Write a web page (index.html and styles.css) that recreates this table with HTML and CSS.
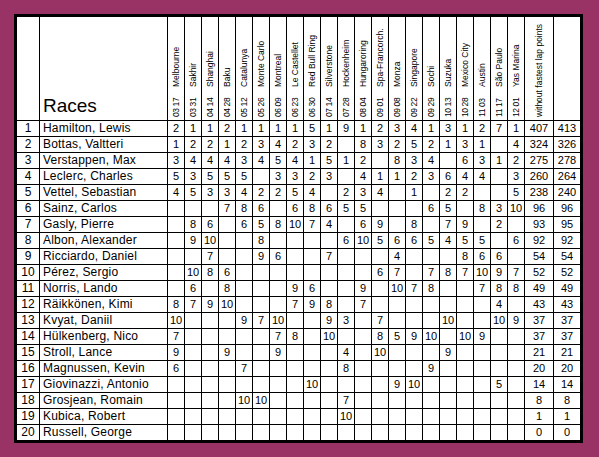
FILE: index.html
```html
<!DOCTYPE html>
<html>
<head>
<meta charset="utf-8">
<link rel="stylesheet" href="styles.css">
</head>
<body>
<table class="grid">
<colgroup>
<col class="c-pos"><col class="c-name">
<col class="c-race"><col class="c-race"><col class="c-race"><col class="c-race"><col class="c-race"><col class="c-race"><col class="c-race">
<col class="c-race"><col class="c-race"><col class="c-race"><col class="c-race"><col class="c-race"><col class="c-race"><col class="c-race">
<col class="c-race"><col class="c-race"><col class="c-race"><col class="c-race"><col class="c-race"><col class="c-race"><col class="c-race">
<col class="c-wo"><col class="c-pts">
</colgroup>
<thead>
<tr class="head">
<td></td>
<td class="title">Races</td>
<td><div class="vt"><span class="d">03 17</span><span class="n">Melbourne</span></div></td>
<td><div class="vt"><span class="d">03 31</span><span class="n">Sakhir</span></div></td>
<td><div class="vt"><span class="d">04 14</span><span class="n">Shanghai</span></div></td>
<td><div class="vt"><span class="d">04 28</span><span class="n">Baku</span></div></td>
<td><div class="vt"><span class="d">05 12</span><span class="n">Catalunya</span></div></td>
<td><div class="vt"><span class="d">05 26</span><span class="n">Monte Carlo</span></div></td>
<td><div class="vt"><span class="d">06 09</span><span class="n">Montreal</span></div></td>
<td><div class="vt"><span class="d">06 23</span><span class="n">Le Castellet</span></div></td>
<td><div class="vt"><span class="d">06 30</span><span class="n">Red Bull Ring</span></div></td>
<td><div class="vt"><span class="d">07 14</span><span class="n">Silverstone</span></div></td>
<td><div class="vt"><span class="d">07 28</span><span class="n">Hockenheim</span></div></td>
<td><div class="vt"><span class="d">08 04</span><span class="n">Hungaroring</span></div></td>
<td><div class="vt"><span class="d">09 01</span><span class="n">Spa-Francorch.</span></div></td>
<td><div class="vt"><span class="d">09 08</span><span class="n">Monza</span></div></td>
<td><div class="vt"><span class="d">09 22</span><span class="n">Singapore</span></div></td>
<td><div class="vt"><span class="d">09 29</span><span class="n">Sochi</span></div></td>
<td><div class="vt"><span class="d">10 13</span><span class="n">Suzuka</span></div></td>
<td><div class="vt"><span class="d">10 28</span><span class="n">Mexico City</span></div></td>
<td><div class="vt"><span class="d">11 03</span><span class="n">Austin</span></div></td>
<td><div class="vt"><span class="d">11 17</span><span class="n">São Paulo</span></div></td>
<td><div class="vt"><span class="d">12 01</span><span class="n">Yas Marina</span></div></td>
<td><div class="vt wide">without fastest lap points</div></td>
<td></td>
</tr>
</thead>
<tbody>
<tr><td class="pos">1</td><td class="name">Hamilton, Lewis</td><td>2</td><td>1</td><td>1</td><td>2</td><td>1</td><td>1</td><td>1</td><td>1</td><td>5</td><td>1</td><td>9</td><td>1</td><td>2</td><td>3</td><td>4</td><td>1</td><td>3</td><td>1</td><td>2</td><td>7</td><td>1</td><td class="pt">407</td><td class="pt">413</td></tr>
<tr><td class="pos">2</td><td class="name">Bottas, Valtteri</td><td>1</td><td>2</td><td>2</td><td>1</td><td>2</td><td>3</td><td>4</td><td>2</td><td>3</td><td>2</td><td></td><td>8</td><td>3</td><td>2</td><td>5</td><td>2</td><td>1</td><td>3</td><td>1</td><td></td><td>4</td><td class="pt">324</td><td class="pt">326</td></tr>
<tr><td class="pos">3</td><td class="name">Verstappen, Max</td><td>3</td><td>4</td><td>4</td><td>4</td><td>3</td><td>4</td><td>5</td><td>4</td><td>1</td><td>5</td><td>1</td><td>2</td><td></td><td>8</td><td>3</td><td>4</td><td></td><td>6</td><td>3</td><td>1</td><td>2</td><td class="pt">275</td><td class="pt">278</td></tr>
<tr><td class="pos">4</td><td class="name">Leclerc, Charles</td><td>5</td><td>3</td><td>5</td><td>5</td><td>5</td><td></td><td>3</td><td>3</td><td>2</td><td>3</td><td></td><td>4</td><td>1</td><td>1</td><td>2</td><td>3</td><td>6</td><td>4</td><td>4</td><td></td><td>3</td><td class="pt">260</td><td class="pt">264</td></tr>
<tr><td class="pos">5</td><td class="name">Vettel, Sebastian</td><td>4</td><td>5</td><td>3</td><td>3</td><td>4</td><td>2</td><td>2</td><td>5</td><td>4</td><td></td><td>2</td><td>3</td><td>4</td><td></td><td>1</td><td></td><td>2</td><td>2</td><td></td><td></td><td>5</td><td class="pt">238</td><td class="pt">240</td></tr>
<tr><td class="pos">6</td><td class="name">Sainz, Carlos</td><td></td><td></td><td></td><td>7</td><td>8</td><td>6</td><td></td><td>6</td><td>8</td><td>6</td><td>5</td><td>5</td><td></td><td></td><td></td><td>6</td><td>5</td><td></td><td>8</td><td>3</td><td>10</td><td class="pt">96</td><td class="pt">96</td></tr>
<tr><td class="pos">7</td><td class="name">Gasly, Pierre</td><td></td><td>8</td><td>6</td><td></td><td>6</td><td>5</td><td>8</td><td>10</td><td>7</td><td>4</td><td></td><td>6</td><td>9</td><td></td><td>8</td><td></td><td>7</td><td>9</td><td></td><td>2</td><td></td><td class="pt">93</td><td class="pt">95</td></tr>
<tr><td class="pos">8</td><td class="name">Albon, Alexander</td><td></td><td>9</td><td>10</td><td></td><td></td><td>8</td><td></td><td></td><td></td><td></td><td>6</td><td>10</td><td>5</td><td>6</td><td>6</td><td>5</td><td>4</td><td>5</td><td>5</td><td></td><td>6</td><td class="pt">92</td><td class="pt">92</td></tr>
<tr><td class="pos">9</td><td class="name">Ricciardo, Daniel</td><td></td><td></td><td>7</td><td></td><td></td><td>9</td><td>6</td><td></td><td></td><td>7</td><td></td><td></td><td></td><td>4</td><td></td><td></td><td></td><td>8</td><td>6</td><td>6</td><td></td><td class="pt">54</td><td class="pt">54</td></tr>
<tr><td class="pos">10</td><td class="name">Pérez, Sergio</td><td></td><td>10</td><td>8</td><td>6</td><td></td><td></td><td></td><td></td><td></td><td></td><td></td><td></td><td>6</td><td>7</td><td></td><td>7</td><td>8</td><td>7</td><td>10</td><td>9</td><td>7</td><td class="pt">52</td><td class="pt">52</td></tr>
<tr><td class="pos">11</td><td class="name">Norris, Lando</td><td></td><td>6</td><td></td><td>8</td><td></td><td></td><td></td><td>9</td><td>6</td><td></td><td></td><td>9</td><td></td><td>10</td><td>7</td><td>8</td><td></td><td></td><td>7</td><td>8</td><td>8</td><td class="pt">49</td><td class="pt">49</td></tr>
<tr><td class="pos">12</td><td class="name">Räikkönen, Kimi</td><td>8</td><td>7</td><td>9</td><td>10</td><td></td><td></td><td></td><td>7</td><td>9</td><td>8</td><td></td><td>7</td><td></td><td></td><td></td><td></td><td></td><td></td><td></td><td>4</td><td></td><td class="pt">43</td><td class="pt">43</td></tr>
<tr><td class="pos">13</td><td class="name">Kvyat, Daniil</td><td>10</td><td></td><td></td><td></td><td>9</td><td>7</td><td>10</td><td></td><td></td><td>9</td><td>3</td><td></td><td>7</td><td></td><td></td><td></td><td>10</td><td></td><td></td><td>10</td><td>9</td><td class="pt">37</td><td class="pt">37</td></tr>
<tr><td class="pos">14</td><td class="name">Hülkenberg, Nico</td><td>7</td><td></td><td></td><td></td><td></td><td></td><td>7</td><td>8</td><td></td><td>10</td><td></td><td></td><td>8</td><td>5</td><td>9</td><td>10</td><td></td><td>10</td><td>9</td><td></td><td></td><td class="pt">37</td><td class="pt">37</td></tr>
<tr><td class="pos">15</td><td class="name">Stroll, Lance</td><td>9</td><td></td><td></td><td>9</td><td></td><td></td><td>9</td><td></td><td></td><td></td><td>4</td><td></td><td>10</td><td></td><td></td><td></td><td>9</td><td></td><td></td><td></td><td></td><td class="pt">21</td><td class="pt">21</td></tr>
<tr><td class="pos">16</td><td class="name">Magnussen, Kevin</td><td>6</td><td></td><td></td><td></td><td>7</td><td></td><td></td><td></td><td></td><td></td><td>8</td><td></td><td></td><td></td><td></td><td>9</td><td></td><td></td><td></td><td></td><td></td><td class="pt">20</td><td class="pt">20</td></tr>
<tr><td class="pos">17</td><td class="name">Giovinazzi, Antonio</td><td></td><td></td><td></td><td></td><td></td><td></td><td></td><td></td><td>10</td><td></td><td></td><td></td><td></td><td>9</td><td>10</td><td></td><td></td><td></td><td></td><td>5</td><td></td><td class="pt">14</td><td class="pt">14</td></tr>
<tr><td class="pos">18</td><td class="name">Grosjean, Romain</td><td></td><td></td><td></td><td></td><td>10</td><td>10</td><td></td><td></td><td></td><td></td><td>7</td><td></td><td></td><td></td><td></td><td></td><td></td><td></td><td></td><td></td><td></td><td class="pt">8</td><td class="pt">8</td></tr>
<tr><td class="pos">19</td><td class="name">Kubica, Robert</td><td></td><td></td><td></td><td></td><td></td><td></td><td></td><td></td><td></td><td></td><td>10</td><td></td><td></td><td></td><td></td><td></td><td></td><td></td><td></td><td></td><td></td><td class="pt">1</td><td class="pt">1</td></tr>
<tr><td class="pos">20</td><td class="name">Russell, George</td><td></td><td></td><td></td><td></td><td></td><td></td><td></td><td></td><td></td><td></td><td></td><td></td><td></td><td></td><td></td><td></td><td></td><td></td><td></td><td></td><td></td><td class="pt">0</td><td class="pt">0</td></tr>
</tbody>
</table>
</body>
</html>
```
FILE: styles.css
```css
html, body {
  margin: 0;
  padding: 0;
  background: #993366;
}
body {
  padding: 14px;
  font-family: "Liberation Sans", Arial, sans-serif;
  color: #000;
}
.grid {
  table-layout: fixed;
  border-collapse: separate;
  border-spacing: 1px;
  border: 2px solid #000;
  background: #000;
  width: 569px;
}
.c-pos { width: 22px; }
.c-name { width: 127px; }
.c-race { width: 16px; }
.c-wo { width: 28px; }
.c-pts { width: 26px; }
.grid td {
  background: #fff;
  padding: 0;
  height: 15px;
  line-height: 15px;
  font-size: 11px;
  text-align: center;
  vertical-align: middle;
  overflow: hidden;
  white-space: nowrap;
}
.grid .head td {
  height: 103px;
  vertical-align: bottom;
}
.grid .head td.title {
  font-size: 19px;
  line-height: 22px;
  text-align: left;
  padding: 0 0 3px 3px;
  height: 100px;
}
.vt {
  writing-mode: vertical-rl;
  transform: rotate(180deg) scaleX(1.15);
  height: 103px;
  box-sizing: border-box;
  padding-top: 3px;
  font-size: 8.5px;
  line-height: 16px;
  text-align: left;
  margin: 0 auto;
}
.vt .d {
  letter-spacing: -0.4px;
}
.vt .n {
  margin-inline-start: 11px;
}
.vt.wide {
  line-height: 28px;
}
.grid td.name {
  font-size: 12px;
  text-align: left;
  padding-left: 3px;
  letter-spacing: 0.2px;
}
.grid td.pos {
  font-size: 12px;
}
.grid td.pt {
  font-size: 11px;
}
```
